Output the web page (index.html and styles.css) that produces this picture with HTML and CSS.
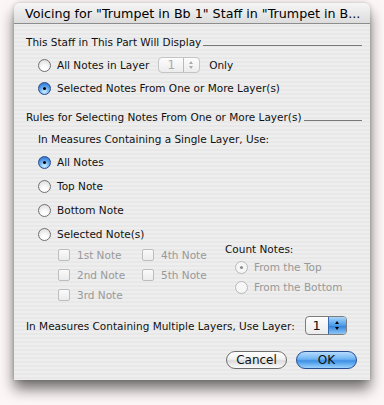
FILE: index.html
```html
<!DOCTYPE html>
<html>
<head>
<meta charset="utf-8">
<link rel="stylesheet" href="styles.css">
</head>
<body>
<div class="window">
  <div class="titlebar">Voicing for "Trumpet in Bb 1" Staff in "Trumpet in B...</div>
  <div class="content">
    <div class="group-head"><span>This Staff in This Part Will Display</span><i class="rule"></i></div>
    <div class="row r1"><span class="radio"></span><span>All Notes in Layer</span><span class="popup disabled"><span class="pv">1</span><span class="arrows"></span></span><span>Only</span></div>
    <div class="row r2"><span class="radio on"></span><span>Selected Notes From One or More Layer(s)</span></div>
    <div class="group-head g2"><span>Rules for Selecting Notes From One or More Layer(s)</span><i class="rule"></i></div>
    <div class="sub">In Measures Containing a Single Layer, Use:</div>
    <div class="row opt first"><span class="radio on"></span><span>All Notes</span></div>
    <div class="row opt"><span class="radio"></span><span>Top Note</span></div>
    <div class="row opt"><span class="radio"></span><span>Bottom Note</span></div>
    <div class="row opt"><span class="radio"></span><span>Selected Note(s)</span></div>
    <div class="selgrid">
      <div class="checks">
        <div class="chk"><span class="box"></span>1st Note</div>
        <div class="chk"><span class="box"></span>4th Note</div>
        <div class="chk"><span class="box"></span>2nd Note</div>
        <div class="chk"><span class="box"></span>5th Note</div>
        <div class="chk"><span class="box"></span>3rd Note</div>
      </div>
      <div class="count">
        <div class="count-label">Count Notes:</div>
        <div class="crow c1"><span class="radio dis on"></span>From the Top</div>
        <div class="crow c2"><span class="radio dis"></span>From the Bottom</div>
      </div>
    </div>
    <div class="multi"><span>In Measures Containing Multiple Layers, Use Layer:</span><span class="popup"><span class="pv">1</span><span class="arrows blue"></span></span></div>
    <div class="buttons"><span class="btn">Cancel</span><span class="btn ok">OK</span></div>
  </div>
</div>
</body>
</html>
```
FILE: styles.css
```css
html, body { margin: 0; padding: 0; }
body {
  width: 384px; height: 405px; overflow: hidden;
  background: #fdf6f6;
  font-family: "DejaVu Sans", "Liberation Sans", sans-serif;
  font-size: 10.5px; color: #111;
}
.window {
  position: relative;
  margin: 3px 0 0 14px;
  width: 356px; height: 377px;
  border-radius: 6px 6px 0 0;
  background: repeating-linear-gradient(to bottom, #eeeeee 0, #eeeeee 2px, #e8e8e8 2px, #e8e8e8 4px);
  box-shadow: 0 9px 14px rgba(0,0,0,0.55), 0 0 4px rgba(0,0,0,0.2);
  overflow: hidden;
}
.titlebar {
  height: 20px;
  border-bottom: 1px solid #8d8d8d;
  background: linear-gradient(to bottom, #f6f6f6, #dcdcdc);
  font-size: 12.7px; line-height: 21px;
  padding-left: 11px;
  white-space: nowrap; color: #000;
}
.content { padding: 10px 8px 0 12px; white-space: nowrap; }
.group-head { display: flex; align-items: flex-end; height: 14px; }
.group-head .rule { flex: 1; border-bottom: 1px solid #777; margin: 0 0 2px 2px; }
.row { display: flex; align-items: center; height: 16px; }
.r1 { margin: 9px 0 0 12px; }
.r2 { margin: 7px 0 0 12px; }
.g2 { margin-top: 13px; }
.sub { margin: 10px 0 0 12px; height: 14px; }
.opt { margin: 8px 0 0 12px; }
.opt.first { margin-top: 7px; }
.radio {
  width: 13px; height: 13px; border-radius: 50%;
  box-sizing: border-box;
  border: 1px solid #707070;
  background: radial-gradient(circle at 50% 75%, #ffffff 20%, #dcdcdc 90%);
  margin-right: 6px; flex: none; position: relative;
}
.radio.on {
  border-color: #2a4a8a;
  background: radial-gradient(circle at 50% 80%, #b9e3ff 10%, #4e97e8 60%, #2964c4 100%);
}
.radio.on::after {
  content: ""; position: absolute; left: 4px; top: 4px;
  width: 3px; height: 3px; border-radius: 50%; background: #000;
}
.radio.dis { border-color: #b8b8b8; background: #f6f6f6; }
.radio.dis.on::after { background: #8a8a8a; }
.popup {
  display: inline-flex; align-items: stretch;
  height: 16px; box-sizing: border-box;
  border: 1px solid #8a8a8a; border-radius: 4px;
  background: linear-gradient(#fdfdfd, #ececec);
  margin: 0 9px 0 9px;
}
.popup .pv { width: 24px; text-align: center; line-height: 14px; font-size: 12px; }
.popup .arrows { width: 15px; border-left: 1px solid #bbb; position: relative; }
.popup .arrows::before, .popup .arrows::after {
  content: ""; position: absolute; left: 5px;
  border-left: 2.5px solid transparent; border-right: 2.5px solid transparent;
}
.popup .arrows::before { top: 3px; border-bottom: 3px solid #333; }
.popup .arrows::after { bottom: 3px; border-top: 3px solid #333; }
.popup.disabled { border-color: #c4c4c4; color: #aaa; }
.popup.disabled .arrows::before { border-bottom-color: #aaa; }
.popup.disabled .arrows::after { border-top-color: #aaa; }
.popup .arrows.blue {
  background: linear-gradient(#a9d5fb, #4a9be9 50%, #2e7fd8 51%, #8cc6f7);
  border-left-color: #3469b3; border-radius: 0 3px 3px 0;
}
.popup .arrows.blue::before { border-bottom-color: #000; }
.popup .arrows.blue::after { border-top-color: #000; }
.selgrid { display: flex; margin: 6px 0 0 32px; }
.checks { display: grid; grid-template-columns: 84px 83px; row-gap: 6px; align-content: start; }
.chk { display: flex; align-items: center; height: 14px; color: #999; }
.box {
  width: 12px; height: 12px; box-sizing: border-box;
  border: 1px solid #bdbdbd; border-radius: 2px;
  background: linear-gradient(#fafafa, #ececec);
  margin-right: 7px; flex: none;
}
.count-label { height: 14px; line-height: 14px; margin-top: -6px; }
.crow { display: flex; align-items: center; height: 14px; color: #999; margin-left: 10px; }
.c1 { margin-top: 4px; }
.c2 { margin-top: 6px; }
.multi { display: flex; align-items: center; margin: 14px 0 0 0; height: 19px; }
.multi .popup { height: 19px; margin-left: 10px; border-color: #7d7d7d; }
.multi .popup .pv { width: 22px; line-height: 17px; font-size: 13px; }
.multi .popup .arrows { width: 17px; }
.multi .popup .arrows::before { top: 4px; left: 6px; }
.multi .popup .arrows::after { bottom: 4px; left: 6px; }
.buttons { display: flex; justify-content: flex-end; gap: 9px; margin: 16px 5px 0 0; }
.btn {
  width: 61px; height: 18px; box-sizing: border-box;
  border: 1px solid #6e6e6e; border-radius: 9px;
  background: linear-gradient(#ffffff 0, #f1f1f1 45%, #dcdcdc 55%, #fbfbfb 100%);
  text-align: center; line-height: 16px; font-size: 12px;
}
.btn.ok {
  border-color: #274e93;
  background: linear-gradient(#b6dcfd 0, #6db3f4 45%, #3d8fe6 55%, #9ad3fe 100%);
}
```
